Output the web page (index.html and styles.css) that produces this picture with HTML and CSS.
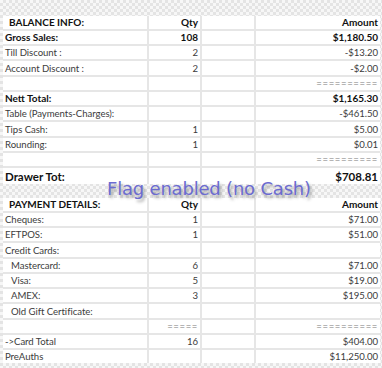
FILE: index.html
```html
<!DOCTYPE html>
<html>
<head>
<meta charset="utf-8">
<link rel="stylesheet" href="styles.css">
</head>
<body>
<div class="page">
  <table class="grid">
    <colgroup><col class="c1"><col class="c2"><col class="c3"><col class="c4"></colgroup>
    <tr class="head"><td class="ind">BALANCE INFO:</td><td class="num">Qty</td><td></td><td class="num">Amount</td></tr>
    <tr class="bold"><td>Gross Sales:</td><td class="num">108</td><td></td><td class="num">$1,180.50</td></tr>
    <tr><td>Till Discount :</td><td class="num">2</td><td></td><td class="num">-$13.20</td></tr>
    <tr><td>Account Discount :</td><td class="num">2</td><td></td><td class="num">-$2.00</td></tr>
    <tr><td></td><td></td><td></td><td class="num eq">==========</td></tr>
    <tr class="bold"><td>Nett Total:</td><td></td><td></td><td class="num">$1,165.30</td></tr>
    <tr><td>Table (Payments-Charges):</td><td></td><td></td><td class="num">-$461.50</td></tr>
    <tr><td>Tips Cash:</td><td class="num">1</td><td></td><td class="num">$5.00</td></tr>
    <tr><td>Rounding:</td><td class="num">1</td><td></td><td class="num">$0.01</td></tr>
    <tr><td></td><td></td><td></td><td class="num eq">==========</td></tr>
    <tr class="bold big"><td>Drawer Tot:</td><td></td><td></td><td class="num">$708.81</td></tr>
  </table>
  <div class="flag">Flag enabled (no Cash)</div>
  <table class="grid">
    <colgroup><col class="c1"><col class="c2"><col class="c3"><col class="c4"></colgroup>
    <tr class="head"><td class="ind">PAYMENT DETAILS:</td><td class="num">Qty</td><td></td><td class="num">Amount</td></tr>
    <tr><td>Cheques:</td><td class="num">1</td><td></td><td class="num">$71.00</td></tr>
    <tr><td>EFTPOS:</td><td class="num">1</td><td></td><td class="num">$51.00</td></tr>
    <tr><td>Credit Cards:</td><td></td><td></td><td></td></tr>
    <tr><td class="sub">Mastercard:</td><td class="num">6</td><td></td><td class="num">$71.00</td></tr>
    <tr><td class="sub">Visa:</td><td class="num">5</td><td></td><td class="num">$19.00</td></tr>
    <tr><td class="sub">AMEX:</td><td class="num">3</td><td></td><td class="num">$195.00</td></tr>
    <tr><td class="sub">Old Gift Certificate:</td><td></td><td></td><td></td></tr>
    <tr><td></td><td class="num eq">=====</td><td></td><td class="num eq">==========</td></tr>
    <tr><td>-&gt;Card Total</td><td class="num">16</td><td></td><td class="num">$404.00</td></tr>
    <tr><td>PreAuths</td><td></td><td></td><td class="num">$11,250.00</td></tr>
  </table>
</div>
</body>
</html>
```

FILE: styles.css
```css
html, body {
  margin: 0;
  padding: 0;
}
body {
  width: 382px;
  height: 368px;
  overflow: hidden;
  background-color: #f7f7f7;
  background-image:
    conic-gradient(#e4e4e4 25%, transparent 0 50%, #e4e4e4 0 75%, transparent 0);
  background-size: 6px 6px;
  font-family: Lato, "Open Sans", sans-serif;
  font-size: 9.6px;
  letter-spacing: -0.05px;
  color: #3c3c3c;
}
.page {
  position: relative;
  display: flex;
  flex-direction: column;
  gap: 14px;
  padding: 16px 2px 0 3px;
}
.grid {
  width: 377px;
  table-layout: fixed;
  border-collapse: collapse;
  background: #fff;
}
.c1 { width: 145px; }
.c2 { width: 53px; }
.c3 { width: 54px; }
.c4 { width: 125px; }
.grid td {
  height: 13px;
  padding: 0 2px 0 2px;
  border: 2px solid #e6e6e6;
  white-space: nowrap;
  overflow: hidden;
  line-height: 13px;
  vertical-align: middle;
}
.grid tr:nth-child(4n) td { height: 14px; }
.grid tr:first-child td { border-top: none; }
.grid tr:last-child td { border-bottom: none; }
.grid td:first-child { border-left: none; }
.grid td:last-child { border-right: none; }
.num { text-align: right; }
.head td, .bold td {
  font-size: 10px;
  font-weight: 700;
  color: #111;
  letter-spacing: 0;
}
.big td {
  font-size: 11.5px;
  height: 16px;
}
.ind { padding-left: 6px !important; }
.sub { padding-left: 8px !important; }
.eq { color: #7a7a7a; letter-spacing: 0.6px; }
.flag {
  position: absolute;
  left: 107px;
  top: 178px;
  font-family: "DejaVu Sans", sans-serif;
  font-size: 18px;
  letter-spacing: -0.2px;
  color: #6b6bd0;
  text-shadow: 2px 3px 3px rgba(60, 60, 60, 0.45);
  white-space: nowrap;
}
```
